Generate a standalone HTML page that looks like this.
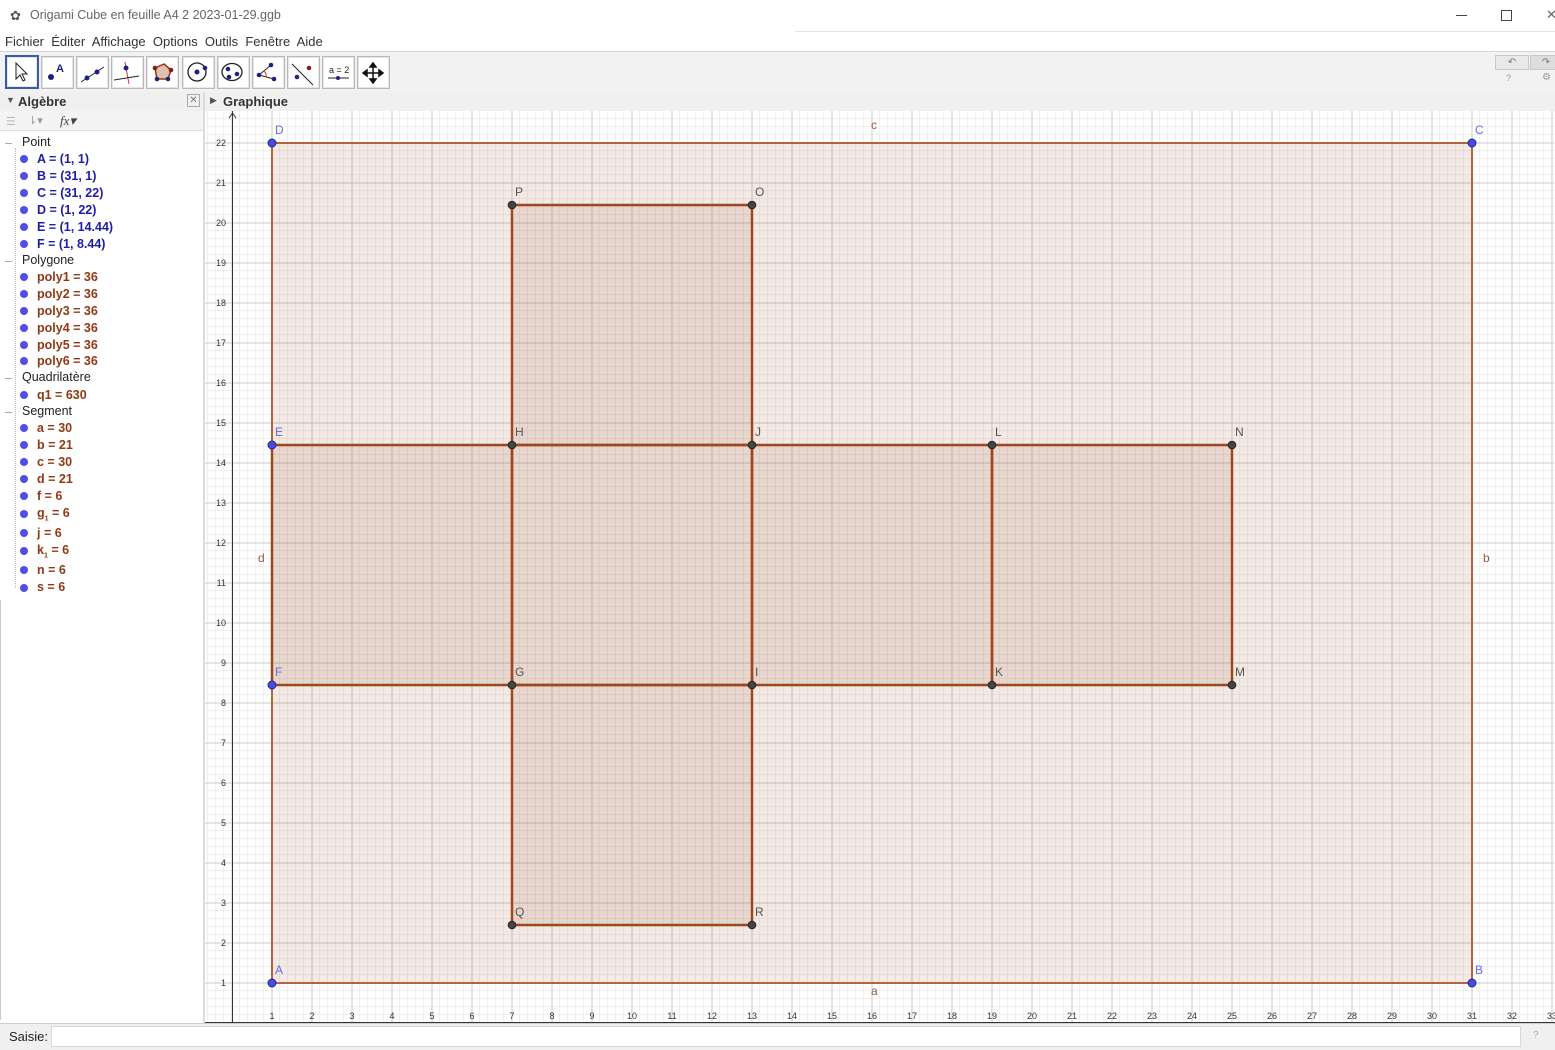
<!DOCTYPE html>
<html><head><meta charset="utf-8"><style>
body{margin:0;width:1555px;height:1049px;overflow:hidden;background:#fff;font-family:"Liberation Sans",sans-serif;position:relative}
.a{position:absolute}
.btn{position:absolute;top:56px;width:31px;height:31px;border:1px solid #b9b9b9;background:#fff;box-shadow:inset 0 0 0 1px #e6e6e6}
.row{position:absolute;left:37px;font-size:12.5px;font-weight:bold;white-space:nowrap}
.dot{position:absolute;left:20px;width:8px;height:8px;border-radius:50%;background:#4e4ee8}
.cat{position:absolute;left:22px;font-size:12.5px;color:#222}
.minus{position:absolute;left:5px;width:7px;height:1px;background:#aaa}
.pt{color:#1d1da6}.pl{color:#8f3a12}
</style></head><body>
<!-- title -->
<div class="a" style="left:10px;top:8px;font-size:13px;color:#555">✿</div>
<div class="a" style="left:30px;top:8px;font-size:12.5px;color:#666">Origami Cube en feuille A4 2 2023-01-29.ggb</div>
<div class="a" style="left:1456px;top:15px;width:11px;height:1px;background:#444"></div>
<div class="a" style="left:1501px;top:10px;width:9px;height:9px;border:1px solid #444"></div>
<div class="a" style="left:1546px;top:7px;font-size:13px;color:#666">✕</div>
<div class="a" style="left:795px;top:31px;width:760px;height:1px;background:#e4e4e4"></div>
<!-- menu -->
<div class="a" style="left:5px;top:34px;font-size:13px;color:#333;word-spacing:0px">Fichier&nbsp; Éditer&nbsp; Affichage&nbsp; Options&nbsp; Outils&nbsp; Fenêtre&nbsp; Aide</div>
<div class="a" style="left:0;top:51px;width:1555px;height:41px;background:#f2f2f2;border-top:1px solid #d5d5d5;border-bottom:1px solid #d0d0d0"></div>
<div class="btn" style="left:5px;border:2px solid #3d5aa8;width:30px;height:30px;top:55px"></div>
<div class="btn" style="left:41px"></div><div class="btn" style="left:76px"></div><div class="btn" style="left:111px"></div><div class="btn" style="left:146px"></div><div class="btn" style="left:182px"></div><div class="btn" style="left:217px"></div><div class="btn" style="left:252px"></div><div class="btn" style="left:287px"></div><div class="btn" style="left:322px"></div><div class="btn" style="left:357px"></div>
<svg class="a" style="left:0;top:52px" width="400" height="40">
<path d="M16 11 L16 27 L20 23 L23 29 L25 28 L22 22 L27 22 Z" fill="#fff" stroke="#222"/>
<circle cx="51" cy="25" r="3" fill="#1a237e"/><text x="56" y="20" font-size="11" fill="#1a237e" font-family="Liberation Sans" font-weight="bold">A</text>
<line x1="81" y1="30" x2="104" y2="15" stroke="#222"/><circle cx="87" cy="26" r="2.5" fill="#1a237e"/><circle cx="97" cy="20" r="2.5" fill="#1a237e"/>
<line x1="125" y1="10" x2="129" y2="32" stroke="#d33"/><line x1="114" y1="28" x2="139" y2="24" stroke="#222"/><circle cx="126" cy="16" r="2.5" fill="#1a237e"/>
<path d="M155 16 L164 12 L171 18 L168 27 L157 27 Z" fill="#e0c0b0" stroke="#8b3a12" stroke-width="1.5"/><circle cx="155" cy="16" r="2.3" fill="#8b1a1a"/><circle cx="171" cy="18" r="2.3" fill="#8b1a1a"/><circle cx="157" cy="27" r="2.3" fill="#1a237e"/><circle cx="168" cy="27" r="2.3" fill="#1a237e"/>
<circle cx="197" cy="20" r="9" fill="none" stroke="#222" stroke-width="1.3"/><circle cx="197" cy="20" r="2.5" fill="#1a237e"/><circle cx="205" cy="16" r="2.3" fill="#1a237e"/>
<ellipse cx="232" cy="20" rx="10" ry="8.5" fill="none" stroke="#222" stroke-width="1.3"/><circle cx="228" cy="17" r="2.3" fill="#1a237e"/><circle cx="237" cy="22" r="2.3" fill="#1a237e"/><circle cx="229" cy="25" r="2.3" fill="#1a237e"/>
<path d="M271 13 L259 23 L274 27" fill="none" stroke="#222"/><path d="M264 19 A6 6 0 0 1 266 25" fill="#f4b0b0" stroke="#d33"/><circle cx="271" cy="13" r="2.3" fill="#1a237e"/><circle cx="259" cy="23" r="2.3" fill="#1a237e"/><circle cx="274" cy="27" r="2.3" fill="#1a237e"/>
<line x1="292" y1="12" x2="313" y2="33" stroke="#222"/><circle cx="297" cy="25" r="2.3" fill="#1a237e"/><circle cx="309" cy="16" r="2.3" fill="#8b1a1a"/>
<text x="329" y="21" font-size="9" fill="#222" font-family="Liberation Sans">a = 2</text><line x1="328" y1="26" x2="349" y2="26" stroke="#222"/><circle cx="338" cy="26" r="2" fill="#1a237e"/>
<path d="M373 12 L373 30 M364 21 L382 21 M373 11 l-3 4 h6z M373 31 l-3 -4 h6z M363 21 l4 -3 v6z M383 21 l-4 -3 v6z" fill="#111" stroke="#111" stroke-width="1.5"/>
</svg>
<!-- right buttons -->
<div class="a" style="left:1495px;top:55px;width:32px;height:13px;border:1px solid #c8c8c8;background:#e9e9e9;font-size:10px;color:#777;text-align:center;line-height:13px">↶</div>
<div class="a" style="left:1530px;top:55px;width:30px;height:13px;border:1px solid #c8c8c8;background:#ddd;font-size:10px;color:#777;text-align:center;line-height:13px">↷</div>
<div class="a" style="left:1506px;top:73px;font-size:9px;color:#999">?</div>
<div class="a" style="left:1542px;top:72px;font-size:10px;color:#999">⚙</div>
<!-- panel headers -->
<div class="a" style="left:0;top:92px;width:1555px;height:19px;background:#f0f0f0;border-bottom:1px solid #d0d0d0"></div>
<div class="a" style="left:6px;top:95px;font-size:9px;color:#555">▼</div>
<div class="a" style="left:18px;top:94px;font-size:13px;font-weight:bold;color:#333">Algèbre</div>
<div class="a" style="left:187px;top:94px;width:11px;height:11px;border:1px solid #aaa;font-size:10px;line-height:11px;text-align:center;color:#777">✕</div>
<div class="a" style="left:210px;top:95px;font-size:9px;color:#555">▶</div>
<div class="a" style="left:223px;top:94px;font-size:13px;font-weight:bold;color:#333">Graphique</div>
<div class="a" style="left:0;top:111px;width:203px;height:19px;background:#f4f4f4;border-bottom:1px solid #ddd"></div>
<div class="a" style="left:6px;top:115px;font-size:11px;color:#bbb">☰</div>
<div class="a" style="left:28px;top:114px;font-size:11px;color:#999">⇂▾</div>
<div class="a" style="left:60px;top:113px;font-size:13px;font-style:italic;font-family:'Liberation Serif',serif;color:#444">fx▾</div>
<div class="a" style="left:203px;top:92px;width:2px;height:932px;background:#dcdcdc"></div>
<div class="a" style="left:0;top:600px;width:1px;height:420px;background:#ccc"></div>
<!-- algebra list -->
<div class="a" style="left:15px;top:148px;width:1px;height:440px;border-left:1px dotted #bbb"></div>
<div class="minus" style="top:143px"></div><div class="cat" style="top:135px">Point</div>
<div class="dot" style="top:155px"></div><div class="row pt" style="top:152px">A = (1, 1)</div>
<div class="dot" style="top:172px"></div><div class="row pt" style="top:169px">B = (31, 1)</div>
<div class="dot" style="top:189px"></div><div class="row pt" style="top:186px">C = (31, 22)</div>
<div class="dot" style="top:206px"></div><div class="row pt" style="top:203px">D = (1, 22)</div>
<div class="dot" style="top:223px"></div><div class="row pt" style="top:220px">E = (1, 14.44)</div>
<div class="dot" style="top:240px"></div><div class="row pt" style="top:237px">F = (1, 8.44)</div>
<div class="minus" style="top:261px"></div><div class="cat" style="top:253px">Polygone</div>
<div class="dot" style="top:273px"></div><div class="row pl" style="top:270px">poly1 = 36</div>
<div class="dot" style="top:290px"></div><div class="row pl" style="top:287px">poly2 = 36</div>
<div class="dot" style="top:307px"></div><div class="row pl" style="top:304px">poly3 = 36</div>
<div class="dot" style="top:324px"></div><div class="row pl" style="top:321px">poly4 = 36</div>
<div class="dot" style="top:341px"></div><div class="row pl" style="top:338px">poly5 = 36</div>
<div class="dot" style="top:357px"></div><div class="row pl" style="top:354px">poly6 = 36</div>
<div class="minus" style="top:378px"></div><div class="cat" style="top:370px">Quadrilatère</div>
<div class="dot" style="top:391px"></div><div class="row pl" style="top:388px">q1 = 630</div>
<div class="minus" style="top:412px"></div><div class="cat" style="top:404px">Segment</div>
<div class="dot" style="top:424px"></div><div class="row pl" style="top:421px">a = 30</div>
<div class="dot" style="top:441px"></div><div class="row pl" style="top:438px">b = 21</div>
<div class="dot" style="top:458px"></div><div class="row pl" style="top:455px">c = 30</div>
<div class="dot" style="top:475px"></div><div class="row pl" style="top:472px">d = 21</div>
<div class="dot" style="top:492px"></div><div class="row pl" style="top:489px">f = 6</div>
<div class="dot" style="top:510px"></div><div class="row pl" style="top:506px">g<sub style="font-size:7px">1</sub> = 6</div>
<div class="dot" style="top:529px"></div><div class="row pl" style="top:526px">j = 6</div>
<div class="dot" style="top:547px"></div><div class="row pl" style="top:543px">k<sub style="font-size:7px">1</sub> = 6</div>
<div class="dot" style="top:566px"></div><div class="row pl" style="top:563px">n = 6</div>
<div class="dot" style="top:584px"></div><div class="row pl" style="top:580px">s = 6</div>
<!-- graphics -->
<svg class="a" style="left:0;top:0" width="1555" height="1049" font-family="Liberation Sans">
<defs>
<pattern id="g" x="232" y="1023" width="40" height="40" patternUnits="userSpaceOnUse">
<path d="M8 0V40M16 0V40M24 0V40M32 0V40M0 8H40M0 16H40M0 24H40M0 32H40" stroke="#efefef" stroke-width="1"/>
<path d="M0.5 0V40M0 0.5H40" stroke="#cbcbcb" stroke-width="1"/>
</pattern>
<clipPath id="c"><rect x="205" y="111" width="1350" height="912"/></clipPath>
</defs>
<g clip-path="url(#c)">
<rect x="205" y="111" width="1350" height="912" fill="#fff"/>
<rect x="205" y="111" width="1350" height="912" fill="url(#g)" transform="translate(-0.5,-0.5)"/>
<rect x="272" y="143" width="1200" height="840" fill="#a0522d" fill-opacity="0.12" stroke="#b4643c" stroke-width="2"/>
<g fill="#a0522d" fill-opacity="0.12" stroke="#a0471c" stroke-width="2.5">
<rect x="512" y="205" width="240" height="240"/>
<rect x="272" y="445" width="240" height="240"/>
<rect x="512" y="445" width="240" height="240"/>
<rect x="752" y="445" width="240" height="240"/>
<rect x="992" y="445" width="240" height="240"/>
<rect x="512" y="685" width="240" height="240"/>
</g>
<line x1="232.5" y1="111" x2="232.5" y2="1023" stroke="#333"/>
<path d="M229 118 L232.5 113 L236 118" fill="none" stroke="#333"/>
<line x1="205" y1="1022.5" x2="1555" y2="1022.5" stroke="#333"/>
<g font-size="9" fill="#333" text-anchor="middle">
<text x="272" y="1019">1</text><text x="312" y="1019">2</text><text x="352" y="1019">3</text><text x="392" y="1019">4</text><text x="432" y="1019">5</text><text x="472" y="1019">6</text><text x="512" y="1019">7</text><text x="552" y="1019">8</text><text x="592" y="1019">9</text><text x="632" y="1019">10</text><text x="672" y="1019">11</text><text x="712" y="1019">12</text><text x="752" y="1019">13</text><text x="792" y="1019">14</text><text x="832" y="1019">15</text><text x="872" y="1019">16</text><text x="912" y="1019">17</text><text x="952" y="1019">18</text><text x="992" y="1019">19</text><text x="1032" y="1019">20</text><text x="1072" y="1019">21</text><text x="1112" y="1019">22</text><text x="1152" y="1019">23</text><text x="1192" y="1019">24</text><text x="1232" y="1019">25</text><text x="1272" y="1019">26</text><text x="1312" y="1019">27</text><text x="1352" y="1019">28</text><text x="1392" y="1019">29</text><text x="1432" y="1019">30</text><text x="1472" y="1019">31</text><text x="1512" y="1019">32</text><text x="1552" y="1019">33</text>
</g>
<g font-size="9" fill="#333" text-anchor="end">
<text x="226" y="986">1</text><text x="226" y="946">2</text><text x="226" y="906">3</text><text x="226" y="866">4</text><text x="226" y="826">5</text><text x="226" y="786">6</text><text x="226" y="746">7</text><text x="226" y="706">8</text><text x="226" y="666">9</text><text x="226" y="626">10</text><text x="226" y="586">11</text><text x="226" y="546">12</text><text x="226" y="506">13</text><text x="226" y="466">14</text><text x="226" y="426">15</text><text x="226" y="386">16</text><text x="226" y="346">17</text><text x="226" y="306">18</text><text x="226" y="266">19</text><text x="226" y="226">20</text><text x="226" y="186">21</text><text x="226" y="146">22</text>
</g>
<g fill="#444" stroke="#222" stroke-width="1">
<circle cx="512" cy="205" r="3.8"/><circle cx="752" cy="205" r="3.8"/>
<circle cx="512" cy="445" r="3.8"/><circle cx="752" cy="445" r="3.8"/><circle cx="992" cy="445" r="3.8"/><circle cx="1232" cy="445" r="3.8"/>
<circle cx="512" cy="685" r="3.8"/><circle cx="752" cy="685" r="3.8"/><circle cx="992" cy="685" r="3.8"/><circle cx="1232" cy="685" r="3.8"/>
<circle cx="512" cy="925" r="3.8"/><circle cx="752" cy="925" r="3.8"/>
</g>
<g fill="#4a4ae0" stroke="#222a80" stroke-width="1">
<circle cx="272" cy="983" r="4"/><circle cx="1472" cy="983" r="4"/><circle cx="1472" cy="143" r="4"/><circle cx="272" cy="143" r="4"/><circle cx="272" cy="445" r="4"/><circle cx="272" cy="685" r="4"/>
</g>
<g font-size="12" fill="#6a6ae6">
<text x="275" y="134">D</text><text x="1475" y="134">C</text><text x="275" y="974">A</text><text x="1475" y="974">B</text><text x="275" y="436">E</text><text x="275" y="676">F</text>
</g>
<g font-size="12" fill="#555">
<text x="515" y="196">P</text><text x="755" y="196">O</text><text x="515" y="436">H</text><text x="755" y="436">J</text><text x="995" y="436">L</text><text x="1235" y="436">N</text>
<text x="515" y="676">G</text><text x="755" y="676">I</text><text x="995" y="676">K</text><text x="1235" y="676">M</text><text x="515" y="916">Q</text><text x="755" y="916">R</text>
</g>
<g font-size="12" fill="#9a5a3a">
<text x="871" y="129">c</text><text x="871" y="995">a</text><text x="258" y="562">d</text><text x="1483" y="562">b</text>
</g>
</g>
</svg>
<!-- input bar -->
<div class="a" style="left:0;top:1023px;width:1555px;height:26px;background:#f0f0f0;border-top:1px solid #cfcfcf"></div>
<div class="a" style="left:9px;top:1029px;font-size:13px;color:#222">Saisie:</div>
<div class="a" style="left:51px;top:1026px;width:1468px;height:19px;background:#fff;border:1px solid #d8d8d8"></div>
<div class="a" style="left:1533px;top:1030px;font-size:10px;color:#aaa">?</div>
</body></html>
